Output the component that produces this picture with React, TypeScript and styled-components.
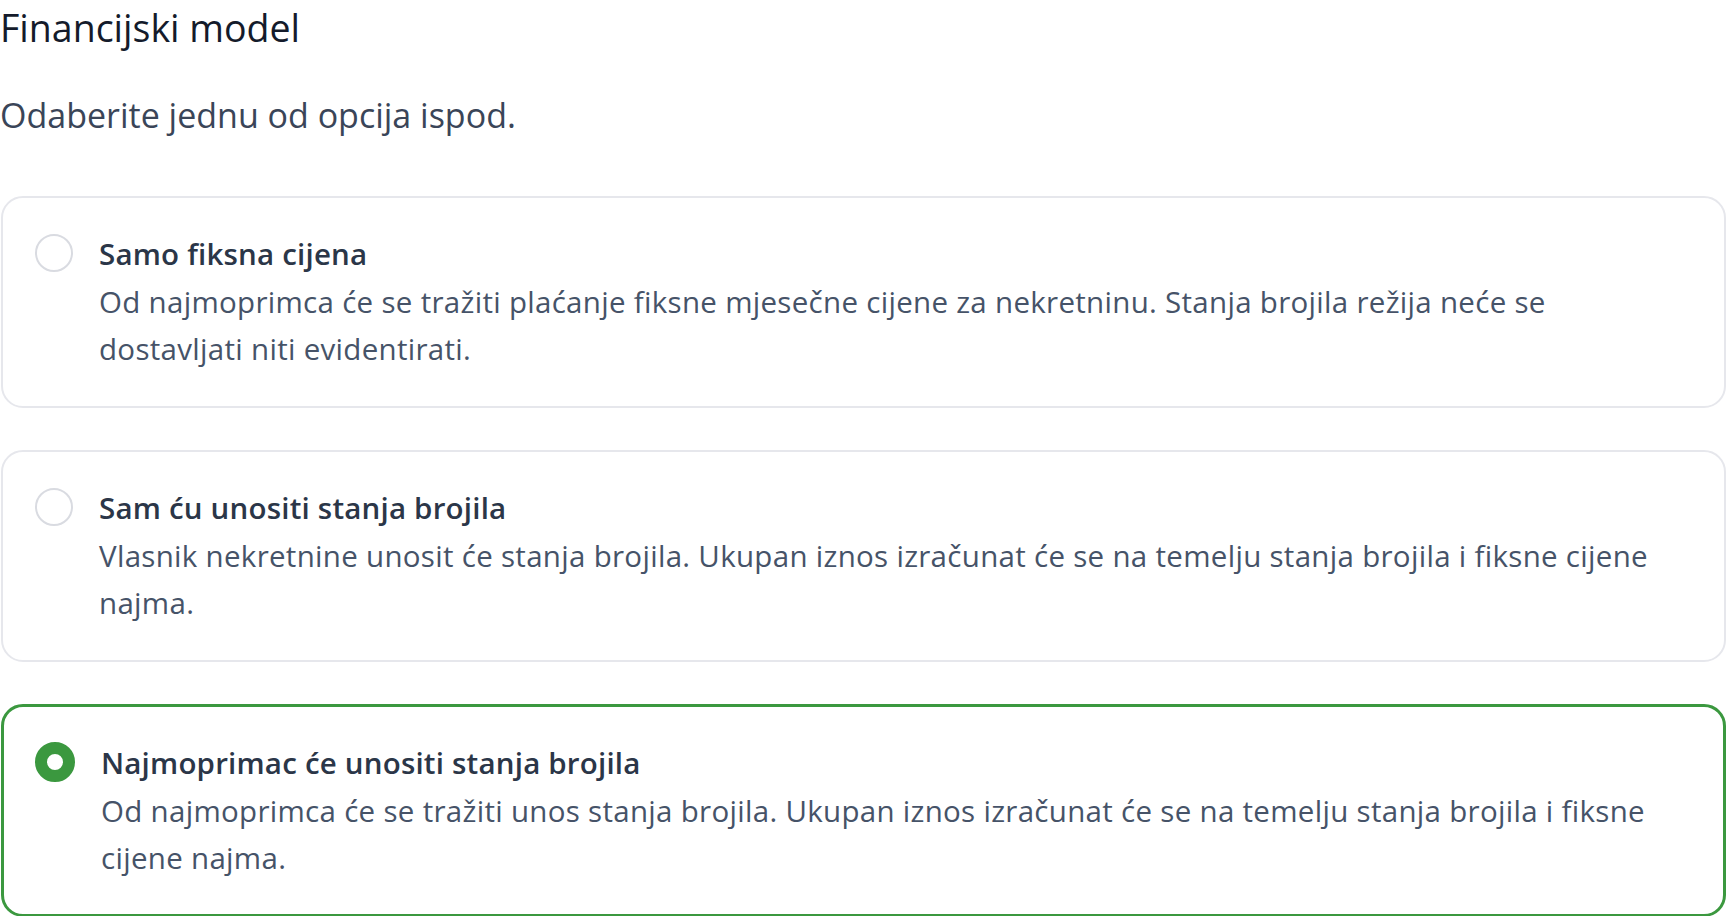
import React, { useState } from 'react'
import styled, { createGlobalStyle, css } from 'styled-components';

const GlobalStyle = createGlobalStyle`
html, body {
  margin:0;
  padding:0;
  background:#ffffff;
}
body{
  font-family:"Open Sans","Liberation Sans",sans-serif;
  -webkit-font-smoothing:antialiased;
}
`;

const Page = styled.section`
width:1728px;
padding-top:4px;
box-sizing:border-box;
`;

const Heading = styled.h2`
margin:0;
font-size:37.5px;
line-height:48px;
font-weight:400;
color:#141b2b;
`;

const Subtitle = styled.p`
margin:39px 0 57px 0;
font-size:34px;
line-height:48px;
font-weight:400;
color:#3a4558;
`;

const OptionList = styled.div`
display:flex;
flex-direction:column;
gap:42px;
padding:0 2px 0 1px;
`;

const OptionCard = styled.label<{ $selected: boolean }>`
display:flex;
align-items:flex-start;
gap:26px;
box-sizing:border-box;
padding:31px 46px 34px 32px;
border:2px solid #e6e7ec;
border-radius:22px;
background:#fff;
cursor:pointer;
${({ $selected }) => $selected && css`
  border:3px solid #3b983f;
  padding:31px 45px 33px 31px;
`}
`;

const Radio = styled.span<{ $checked: boolean }>`
flex:none;
width:38px;
height:38px;
margin-top:5px;
box-sizing:border-box;
border-radius:50%;
border:2px solid #d9dbe1;
background:#fff;
${({ $checked }) => $checked && css`
  width:40px;
  height:40px;
  margin-top:4px;
  border:12.5px solid #3b983f;
`}
`;

const OptionBody = styled.div`
flex:1;
min-width:0;
`;

const OptionTitle = styled.div`
font-size:29.5px;
line-height:49px;
font-weight:600;
letter-spacing:0.2px;
color:#2b3648;
`;

const OptionText = styled.div`
font-size:29.5px;
line-height:47px;
font-weight:400;
letter-spacing:0.3px;
color:#465368;
`;

const options = [
  {
    id: 'fixed',
    title: 'Samo fiksna cijena',
    text: 'Od najmoprimca će se tražiti plaćanje fiksne mjesečne cijene za nekretninu. Stanja brojila režija neće se dostavljati niti evidentirati.',
  },
  {
    id: 'owner',
    title: 'Sam ću unositi stanja brojila',
    text: 'Vlasnik nekretnine unosit će stanja brojila. Ukupan iznos izračunat će se na temelju stanja brojila i fiksne cijene najma.',
  },
  {
    id: 'tenant',
    title: 'Najmoprimac će unositi stanja brojila',
    text: 'Od najmoprimca će se tražiti unos stanja brojila. Ukupan iznos izračunat će se na temelju stanja brojila i fiksne cijene najma.',
  },
];

export default function App() {
  const [selected, setSelected] = useState('tenant');

  return (
    <Page>
      <GlobalStyle />
      <Heading>Financijski model</Heading>
      <Subtitle>Odaberite jednu od opcija ispod.</Subtitle>
      <OptionList>
        {options.map((option) => (
          <OptionCard
            key={option.id}
            $selected={selected === option.id}
            onClick={() => setSelected(option.id)}
          >
            <Radio $checked={selected === option.id} />
            <OptionBody>
              <OptionTitle>{option.title}</OptionTitle>
              <OptionText>{option.text}</OptionText>
            </OptionBody>
          </OptionCard>
        ))}
      </OptionList>
    </Page>
  )
}
